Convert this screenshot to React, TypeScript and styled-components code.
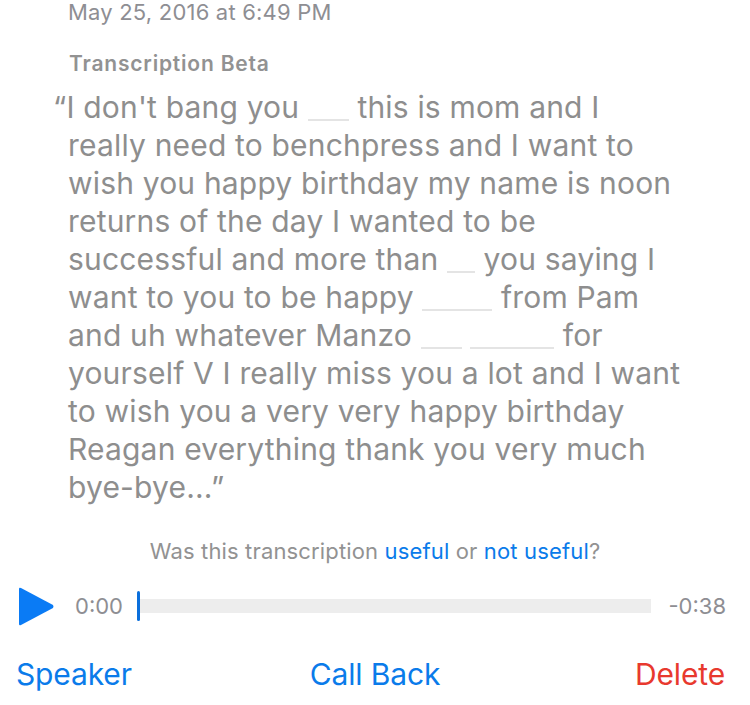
import React from "react";
import styled, { createGlobalStyle } from "styled-components";

const GlobalStyle = createGlobalStyle`
  html, body {
    margin: 0;
    background: #fff;
    font-family: Inter, "Liberation Sans", sans-serif;
  }
`;

const Page = styled.div`
  width: 750px;
  height: 705px;
  overflow: hidden;
  display: flex;
  flex-direction: column;
`;

const DateLine = styled.div`
  margin: -2px 0 0 68px;
  font-size: 22px;
  line-height: 28px;
  color: #8e8e93;
  letter-spacing: 0.2px;
`;

const Label = styled.div`
  margin: 25px 0 0 69px;
  font-size: 21px;
  line-height: 26px;
  font-weight: 600;
  color: #929292;
  letter-spacing: 0.8px;
`;

const Transcript = styled.div`
  margin: 11px 0 0 68px;
  font-size: 30px;
  line-height: 38px;
  color: #8e8e8e;
  letter-spacing: 0.18px;
`;

const Line = styled.div`
  white-space: nowrap;
`;

const OpenQuote = styled.span`
  margin-left: -15px;
`;

const Blank = styled.span<{ $w: number }>`
  display: inline-block;
  width: ${(p) => p.$w}px;
  height: 2px;
  background: #e4e4e4;
  vertical-align: -3px;
`;

const Feedback = styled.div`
  margin-top: 31px;
  text-align: center;
  font-size: 22px;
  line-height: 28px;
  color: #929292;
  letter-spacing: 0.15px;
`;

const FeedbackLink = styled.span`
  color: #0a7bea;
`;

const Player = styled.div`
  margin-top: 21px;
  padding: 0 24px 0 19px;
  height: 40px;
  display: flex;
  align-items: center;
`;

const PlayIcon = styled.svg`
  width: 35px;
  height: 39px;
  flex: none;
  fill: #0a7bf5;
`;

const Time = styled.span`
  font-size: 22px;
  color: #8e8e93;
  margin-left: 21px;
`;

const Track = styled.div`
  flex: 1;
  height: 14px;
  margin: 0 17px 0 15px;
  position: relative;
  background: #ededed;
`;

const Scrubber = styled.div`
  position: absolute;
  left: -1px;
  top: -8px;
  width: 3px;
  height: 30px;
  border-radius: 2px;
  background: #0a6fdc;
`;

const Remaining = styled.span`
  font-size: 22px;
  color: #8e8e93;
`;

const Actions = styled.div`
  margin-top: 28px;
  padding: 0 25px;
  display: grid;
  grid-template-columns: 1fr auto 1fr;
  font-size: 30px;
  line-height: 40px;
  letter-spacing: -0.15px;
`;

const Action = styled.span<{ $danger?: boolean }>`
  color: ${(p) => (p.$danger ? "#e8392e" : "#0a7bea")};
  text-align: ${(p) => (p.$danger ? "right" : "left")};
`;

const SpeakerAction = styled(Action)`
  margin-left: -9px;
`;

export default function App() {
  return (
    <Page>
      <GlobalStyle />
      <DateLine>May 25, 2016 at 6:49 PM</DateLine>
      <Label>Transcription Beta</Label>
      <Transcript>
        <Line>
          <OpenQuote>“</OpenQuote>I don't bang you <Blank $w={41} /> this is mom and I
        </Line>
        <Line>really need to benchpress and I want to</Line>
        <Line>wish you happy birthday my name is noon</Line>
        <Line>returns of the day I wanted to be</Line>
        <Line>
          successful and more than <Blank $w={28} /> you saying I
        </Line>
        <Line>
          want to you to be happy <Blank $w={70} /> from Pam
        </Line>
        <Line>
          and uh whatever Manzo <Blank $w={41} /> <Blank $w={84} /> for
        </Line>
        <Line>yourself V I really miss you a lot and I want</Line>
        <Line>to wish you a very very happy birthday</Line>
        <Line>Reagan everything thank you very much</Line>
        <Line>bye-bye...”</Line>
      </Transcript>
      <Feedback>
        Was this transcription <FeedbackLink>useful</FeedbackLink> or{" "}
        <FeedbackLink>not useful</FeedbackLink>?
      </Feedback>
      <Player>
        <PlayIcon viewBox="0 0 35 39">
          <path d="M0 2 Q0 0 2 1 L34 18 Q35 19.500 34 21 L2 38 Q0 39 0 37 Z" />
        </PlayIcon>
        <Time>0:00</Time>
        <Track>
          <Scrubber />
        </Track>
        <Remaining>-0:38</Remaining>
      </Player>
      <Actions>
        <SpeakerAction>Speaker</SpeakerAction>
        <Action>Call Back</Action>
        <Action $danger>Delete</Action>
      </Actions>
    </Page>
  );
}
